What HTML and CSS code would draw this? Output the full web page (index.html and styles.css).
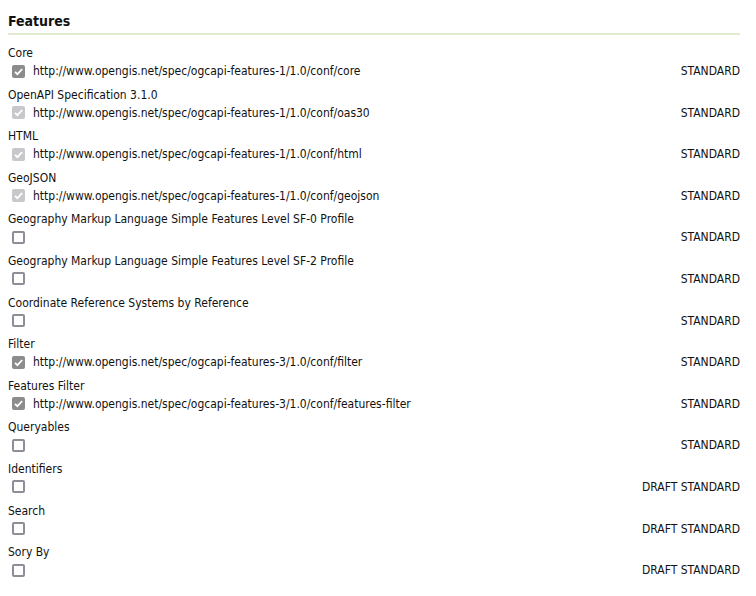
FILE: index.html
```html
<!DOCTYPE html>
<html>
<head>
<meta charset="utf-8">
<link rel="stylesheet" href="styles.css">
</head>
<body>
<section class="features">
  <h2 class="title">Features</h2>
  <ul class="list">
    <li class="item">
      <div class="label">Core</div>
      <div class="row"><span class="box checked dark"><svg viewBox="0 0 13 13"><path d="M3 6.8l2.4 2.4L10.2 4" /></svg></span><span class="uri">http://www.opengis.net/spec/ogcapi-features-1/1.0/conf/core</span><span class="status">STANDARD</span></div>
    </li>
    <li class="item">
      <div class="label">OpenAPI Specification 3.1.0</div>
      <div class="row"><span class="box checked light"><svg viewBox="0 0 13 13"><path d="M3 6.8l2.4 2.4L10.2 4" /></svg></span><span class="uri">http://www.opengis.net/spec/ogcapi-features-1/1.0/conf/oas30</span><span class="status">STANDARD</span></div>
    </li>
    <li class="item">
      <div class="label">HTML</div>
      <div class="row"><span class="box checked light"><svg viewBox="0 0 13 13"><path d="M3 6.8l2.4 2.4L10.2 4" /></svg></span><span class="uri">http://www.opengis.net/spec/ogcapi-features-1/1.0/conf/html</span><span class="status">STANDARD</span></div>
    </li>
    <li class="item">
      <div class="label">GeoJSON</div>
      <div class="row"><span class="box checked light"><svg viewBox="0 0 13 13"><path d="M3 6.8l2.4 2.4L10.2 4" /></svg></span><span class="uri">http://www.opengis.net/spec/ogcapi-features-1/1.0/conf/geojson</span><span class="status">STANDARD</span></div>
    </li>
    <li class="item">
      <div class="label">Geography Markup Language Simple Features Level SF-0 Profile</div>
      <div class="row"><span class="box"></span><span class="uri"></span><span class="status">STANDARD</span></div>
    </li>
    <li class="item">
      <div class="label">Geography Markup Language Simple Features Level SF-2 Profile</div>
      <div class="row"><span class="box"></span><span class="uri"></span><span class="status">STANDARD</span></div>
    </li>
    <li class="item">
      <div class="label">Coordinate Reference Systems by Reference</div>
      <div class="row"><span class="box"></span><span class="uri"></span><span class="status">STANDARD</span></div>
    </li>
    <li class="item">
      <div class="label">Filter</div>
      <div class="row"><span class="box checked dark"><svg viewBox="0 0 13 13"><path d="M3 6.8l2.4 2.4L10.2 4" /></svg></span><span class="uri">http://www.opengis.net/spec/ogcapi-features-3/1.0/conf/filter</span><span class="status">STANDARD</span></div>
    </li>
    <li class="item">
      <div class="label">Features Filter</div>
      <div class="row"><span class="box checked dark"><svg viewBox="0 0 13 13"><path d="M3 6.8l2.4 2.4L10.2 4" /></svg></span><span class="uri">http://www.opengis.net/spec/ogcapi-features-3/1.0/conf/features-filter</span><span class="status">STANDARD</span></div>
    </li>
    <li class="item">
      <div class="label">Queryables</div>
      <div class="row"><span class="box"></span><span class="uri"></span><span class="status">STANDARD</span></div>
    </li>
    <li class="item">
      <div class="label">Identifiers</div>
      <div class="row"><span class="box"></span><span class="uri"></span><span class="status">DRAFT STANDARD</span></div>
    </li>
    <li class="item">
      <div class="label">Search</div>
      <div class="row"><span class="box"></span><span class="uri"></span><span class="status">DRAFT STANDARD</span></div>
    </li>
    <li class="item">
      <div class="label">Sory By</div>
      <div class="row"><span class="box"></span><span class="uri"></span><span class="status">DRAFT STANDARD</span></div>
    </li>
  </ul>
</section>
</body>
</html>
```
FILE: styles.css
```css
html, body {
  margin: 0;
  padding: 0;
  background: #ffffff;
}
body {
  font-family: "DejaVu Sans Condensed", "DejaVu Sans", sans-serif;
  font-size: 12px;
  color: #111111;
}
.features {
  padding: 12px 16px 0 8px;
}
.title {
  margin: 0;
  font-size: 14px;
  font-weight: bold;
  line-height: 19px;
  padding-bottom: 2px;
  border-bottom: 2px solid #e1ebcf;
}
.list {
  list-style: none;
  margin: 9px 0 0 0;
  padding: 0;
}
.item {
  height: 41.6px;
}
.label {
  height: 18px;
  line-height: 18px;
}
.row {
  display: flex;
  align-items: center;
  height: 18px;
}
.box {
  box-sizing: border-box;
  width: 13px;
  height: 13px;
  margin-left: 4px;
  margin-right: 8px;
  border: 2px solid #8e8e98;
  border-radius: 2px;
  flex: none;
  display: flex;
}
.box.checked {
  border: none;
}
.box.dark {
  background: #8c8c8c;
}
.box.light {
  background: #c8c8cc;
}
.box svg {
  width: 13px;
  height: 13px;
}
.box path {
  fill: none;
  stroke: #ffffff;
  stroke-width: 1.8;
}
.uri {
  flex: 1;
}
.status {
  flex: none;
}
```
